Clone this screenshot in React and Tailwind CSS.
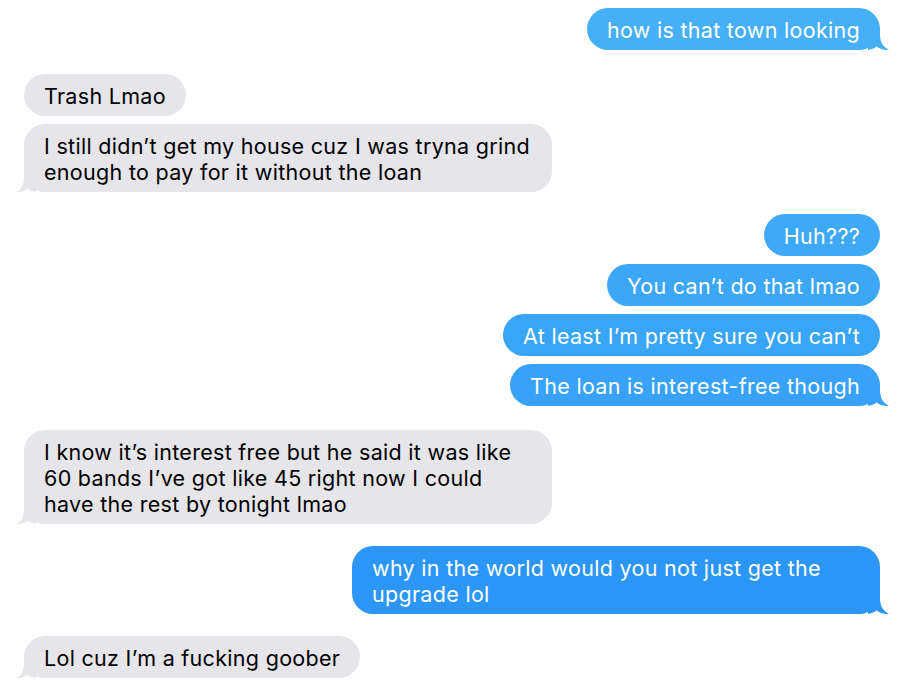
const messages = [
  {
    gap: 'mt-0',
    items: [{ me: true, color: 'bg-[#45aff8]', fill: '#45aff8', text: 'how is that town looking' }],
  },
  {
    gap: 'mt-6',
    items: [
      { me: false, text: 'Trash Lmao' },
      { me: false, text: 'I still didn’t get my house cuz I was tryna grind enough to pay for it without the loan' },
    ],
  },
  {
    gap: 'mt-[22px]',
    items: [
      { me: true, color: 'bg-[#3ea9f7]', fill: '#3ea9f7', text: 'Huh???' },
      { me: true, color: 'bg-[#3ca7f7]', fill: '#3ca7f7', text: 'You can’t do that lmao' },
      { me: true, color: 'bg-[#39a5f7]', fill: '#39a5f7', text: 'At least I’m pretty sure you can’t' },
      { me: true, color: 'bg-[#37a2f7]', fill: '#37a2f7', text: 'The loan is interest-free though' },
    ],
  },
  {
    gap: 'mt-6',
    items: [
      { me: false, text: 'I know it’s interest free but he said it was like 60 bands I’ve got like 45 right now I could have the rest by tonight lmao' },
    ],
  },
  {
    gap: 'mt-[22px]',
    items: [{ me: true, color: 'bg-[#2c96f6]', fill: '#2c96f6', text: 'why in the world would you not just get the upgrade lol' }],
  },
  {
    gap: 'mt-[22px]',
    items: [{ me: false, text: 'Lol cuz I’m a fucking goober' }],
  },
]

function Tail({ me, fill }) {
  if (me) {
    return (
      <svg className="absolute bottom-0 right-[-9px]" width="21" height="21" viewBox="0 0 21 21">
        <path d="M0 0 H12 V5 C12 13 15 18 21 21 C16 21.4 11.5 20 8.5 17.5 C5.5 19.8 3 20.6 0 21 Z" fill={fill} />
      </svg>
    )
  }
  return (
    <svg className="absolute bottom-0 left-[-7px]" width="19" height="21" viewBox="0 0 19 21">
      <path d="M19 0 H7 V5 C7 13 5 18 0 21 C4 21.4 8 20 10.5 17.5 C13.5 19.8 16 20.6 19 21 Z" fill={fill} />
    </svg>
  )
}

function Bubble({ msg, last }) {
  const fill = msg.me ? msg.fill : '#e5e5ea'
  return (
    <div className={`flex ${msg.me ? 'justify-end' : 'justify-start'}`}>
      <div
        className={`relative max-w-[528px] rounded-[21px] px-5 pt-[9px] pb-[7px] text-[21.5px] leading-[26px] tracking-[0.3px] ${
          msg.me ? `${msg.color} text-white` : 'bg-[#e5e5ea] text-black'
        }`}
      >
        <span className="relative z-10 block">{msg.text}</span>
        {last && <Tail me={msg.me} fill={fill} />}
      </div>
    </div>
  )
}

export default function App() {
  return (
    <div
      className="min-h-screen bg-white pl-6 pr-[22px] pt-2 flex flex-col"
      style={{ fontFamily: 'Inter, "Noto Sans", sans-serif' }}
    >
      {messages.map((group, gi) => (
        <div key={gi} className={`flex flex-col gap-2 ${group.gap}`}>
          {group.items.map((msg, i) => (
            <Bubble key={i} msg={msg} last={i === group.items.length - 1} />
          ))}
        </div>
      ))}
    </div>
  )
}
